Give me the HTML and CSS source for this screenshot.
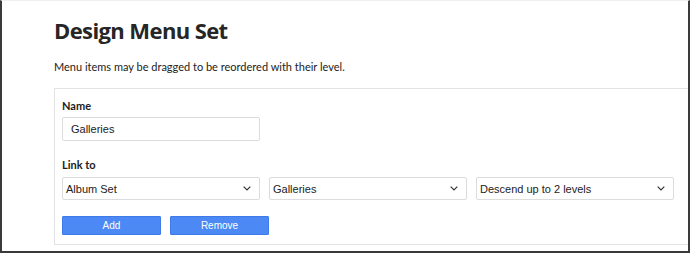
FILE: index.html
```html
<!DOCTYPE html>
<html>
<head>
<meta charset="utf-8">
<link rel="stylesheet" href="styles.css">
</head>
<body>
<div class="frame">
  <h1 class="title">Design Menu Set</h1>
  <p class="intro">Menu items may be dragged to be reordered with their level.</p>
  <div class="panel">
    <label class="label">Name</label>
    <div class="field">Galleries</div>
    <label class="label label-link">Link to</label>
    <div class="selects">
      <div class="select"><span>Album Set</span><svg class="chev" viewBox="0 0 8 5" width="8" height="5"><path d="M0.7 0.7 L4 4 L7.3 0.7" fill="none" stroke="#333" stroke-width="1.2"/></svg></div>
      <div class="select"><span>Galleries</span><svg class="chev" viewBox="0 0 8 5" width="8" height="5"><path d="M0.7 0.7 L4 4 L7.3 0.7" fill="none" stroke="#333" stroke-width="1.2"/></svg></div>
      <div class="select"><span>Descend up to 2 levels</span><svg class="chev" viewBox="0 0 8 5" width="8" height="5"><path d="M0.7 0.7 L4 4 L7.3 0.7" fill="none" stroke="#333" stroke-width="1.2"/></svg></div>
    </div>
    <div class="buttons">
      <button class="btn">Add</button>
      <button class="btn">Remove</button>
    </div>
  </div>
</div>
</body>
</html>
```
FILE: styles.css
```css
html, body {
  margin: 0;
  padding: 0;
  background: #fff;
}
.frame {
  box-sizing: border-box;
  width: 690px;
  height: 253px;
  border-left: 2px solid #3a3a3a;
  border-right: 2px solid #3a3a3a;
  border-bottom: 2px solid #3a3a3a;
  border-top: 1px solid #f0f0f0;
  padding: 0 0 0 52px;
  overflow: hidden;
  font-family: "Lato", "Open Sans", sans-serif;
  color: #222;
}
.title {
  margin: 13px 0 0;
  font-family: "Open Sans", "Noto Sans", sans-serif;
  font-size: 22px;
  line-height: 32px;
  font-weight: 700;
  letter-spacing: -0.6px;
  color: #262626;
}
.intro {
  margin: 13px 0 0;
  font-size: 11px;
  line-height: 16px;
  color: #222;
}
.panel {
  margin-top: 13px;
  border: 1px solid #e3e3e3;
  border-right: none;
  padding: 9px 0 0 7px;
  height: 157px;
  box-sizing: border-box;
}
.label {
  display: block;
  font-size: 11px;
  line-height: 16px;
  font-weight: 700;
  color: #1c1c1c;
}
.label-link {
  margin-top: 16px;
}
.field {
  box-sizing: border-box;
  width: 198px;
  height: 24px;
  margin-top: 3px;
  border: 1px solid #dcdcdc;
  border-radius: 2px;
  padding: 0 8px;
  display: flex;
  align-items: center;
  font-family: "Liberation Sans", Arial, sans-serif;
  font-size: 11px;
  color: #222;
}
.selects {
  display: flex;
  gap: 9px;
  margin-top: 4px;
}
.select {
  box-sizing: border-box;
  width: 198px;
  height: 23px;
  border: 1px solid #dcdcdc;
  border-radius: 2px;
  padding: 0 8px 0 3px;
  display: flex;
  align-items: center;
  justify-content: space-between;
  font-family: "Liberation Sans", Arial, sans-serif;
  font-size: 11px;
  color: #222;
}
.chev {
  display: block;
}
.buttons {
  display: flex;
  gap: 9px;
  margin-top: 16px;
}
.btn {
  box-sizing: border-box;
  width: 99px;
  height: 19px;
  margin: 0;
  padding: 0;
  border: 1px solid #3f7be8;
  border-radius: 1px;
  background: #4c89f4;
  color: #fff;
  font-family: "Liberation Sans", Arial, sans-serif;
  font-size: 10px;
}
```
